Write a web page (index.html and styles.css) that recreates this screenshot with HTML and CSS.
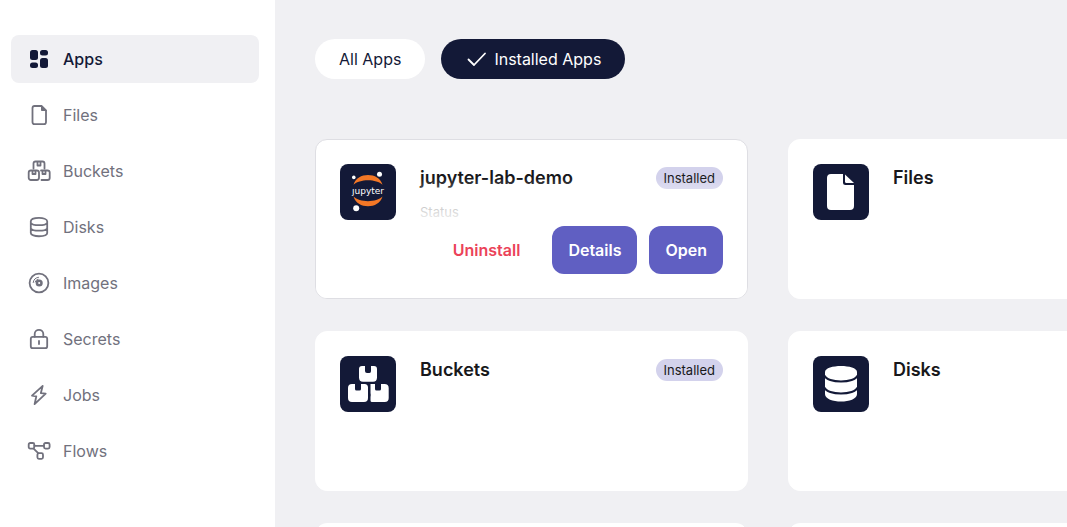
FILE: index.html
```html
<!DOCTYPE html>
<html lang="en">
<head>
<meta charset="utf-8">
<meta name="viewport" content="width=device-width, initial-scale=1">
<title>Apps</title>
<link rel="stylesheet" href="styles.css">
</head>
<body>
<div class="layout">
  <nav class="sidebar" aria-label="Main">
    <a class="nav-item active" href="#apps" aria-current="page">
      <svg class="nav-icon" viewBox="0 0 24 24" fill="currentColor"><rect x="3" y="3" width="8" height="10" rx="2.5"/><rect x="3" y="15.500" width="8" height="5.500" rx="2.500"/><rect x="13" y="3" width="8" height="5.500" rx="2.500"/><rect x="13" y="11" width="8" height="10" rx="2.5"/></svg>
      <span>Apps</span>
    </a>
    <a class="nav-item" href="#files">
      <svg class="nav-icon line" viewBox="0 0 24 24"><path d="M7.500 3H14.500L19 7.500V19Q19 21.200 17 21.200H7.500Q5.500 21.200 5.500 19V5Q5.500 3 7.500 3Z"/><path d="M14.500 3V7.500H19Z" fill="currentColor" stroke-width="1"/></svg>
      <span>Files</span>
    </a>
    <a class="nav-item" href="#buckets">
      <svg class="nav-icon line" viewBox="0 0 24 24"><path d="M6.500 9.500V4.500Q6.500 2.500 8.500 2.500H15.500Q17.500 2.500 17.500 4.500V9.500M10.500 3V6.500H13.500V3"/><rect x="1.700" y="11.500" width="10.300" height="9.500" rx="2.200"/><path d="M5.500 12V15H8.500V12M14 11.500H20.500Q22.700 11.500 22.700 13.500V19Q22.700 21 20.500 21H14.500M15.500 12V15H18.500V12"/></svg>
      <span>Buckets</span>
    </a>
    <a class="nav-item" href="#disks">
      <svg class="nav-icon line" viewBox="0 0 24 24"><path d="M3.800 6.300C3.800 1.800 20.200 1.800 20.200 6.300V18C20.200 22.300 3.800 22.300 3.800 18ZM3.800 7.800C5.500 11 18.500 11 20.200 7.800M3.800 13.300C5.500 16.500 18.500 16.500 20.200 13.300"/></svg>
      <span>Disks</span>
    </a>
    <a class="nav-item" href="#images">
      <svg class="nav-icon line" viewBox="0 0 24 24"><circle cx="12" cy="12" r="9.400"/><circle cx="12.200" cy="12" r="2.300" stroke-width="2.500"/><path d="M6.200 11.500Q6.700 6.900 11.500 6.300M8.200 11Q8.800 8.600 11 8.300" stroke-width="1"/></svg>
      <span>Images</span>
    </a>
    <a class="nav-item" href="#secrets">
      <svg class="nav-icon line" viewBox="0 0 24 24"><rect x="3.800" y="9.800" width="16.400" height="11.400" rx="2"/><path d="M7.700 9.800V7C7.700 1.400 16.300 1.400 16.300 7V9.800M12 14V17"/></svg>
      <span>Secrets</span>
    </a>
    <a class="nav-item" href="#jobs">
      <svg class="nav-icon line" viewBox="0 0 24 24"><path d="M15.700 2.800L5 12.700L9.300 13.300L7.600 21.200L18.700 10.700L13.800 10.200Z"/></svg>
      <span>Jobs</span>
    </a>
    <a class="nav-item" href="#flows">
      <svg class="nav-icon line" viewBox="0 0 24 24"><rect x="1.700" y="4" width="5.600" height="5.600" rx="1.500"/><rect x="17" y="4" width="5.600" height="5.600" rx="1.500"/><rect x="10.400" y="14.200" width="5.600" height="5.600" rx="1.500"/><path d="M7.300 6.800H17M6.600 9.600L11.200 14.200"/></svg>
      <span>Flows</span>
    </a>
  </nav>

  <main class="content">
    <div class="filters">
      <button class="pill" type="button">All Apps</button>
      <button class="pill selected" type="button" aria-pressed="true">
        <svg class="check" viewBox="0 0 24 24"><path d="M3.500 12.500L9 18L20 6.500"/></svg>
        <span>Installed Apps</span>
      </button>
    </div>

    <div class="cards">
      <article class="card hovered">
        <svg class="app-icon" viewBox="0 0 56 56"><rect width="56" height="56" rx="8" fill="#131937"/><path d="M13.500 20.800C17 7.800 39 7.800 42.500 20.800C36.500 14.600 19.500 14.600 13.500 20.800Z" fill="#f37726"/><path d="M13.500 32.500C17 45.500 39 45.500 42.500 32.500C36.500 38.700 19.500 38.700 13.500 32.500Z" fill="#f37726"/><circle cx="13.800" cy="13.400" r="1.800" fill="#fff"/><circle cx="39.500" cy="10.300" r="2.500" fill="#fff"/><circle cx="16.200" cy="44.300" r="3" fill="#fff"/><text class="logo-text" x="28" y="29.500" text-anchor="middle">ȷupyter</text></svg>
        <div class="details">
          <div class="card-head"><h2>jupyter-lab-demo</h2><span class="badge">Installed</span></div>
          <p class="status">Status</p>
        </div>
        <div class="actions">
          <button class="btn danger" type="button">Uninstall</button>
          <button class="btn" type="button">Details</button>
          <button class="btn" type="button">Open</button>
        </div>
      </article>
      <article class="card">
        <svg class="app-icon" viewBox="0 0 56 56"><rect width="56" height="56" rx="8" fill="#131937"/><path d="M18 10H30V18.500Q30 21 32.500 21H41V42Q41 46 37 46H18Q14 46 14 42V14Q14 10 18 10Z" fill="#fff"/><path d="M32 10.500L41 19H33.500Q32 19 32 17.500Z" fill="#fff"/></svg>
        <div class="details">
          <div class="card-head"><h2>Files</h2></div>
        </div>
      </article>
      <article class="card">
        <svg class="app-icon" viewBox="0 0 56 56"><rect width="56" height="56" rx="8" fill="#131937"/><g fill="#fff"><path d="M22 10H25V15Q25 17 27 17H29.500Q31 17 31 15V10H34Q37 10 37 13V21.500Q37 25.700 33 25.700H23Q19 25.700 19 21.500V13Q19 10 22 10Z"/><path d="M12 28H15V33Q15 34.500 16.500 34.500H19.500Q21 34.500 21 33V28H24.500Q28 28 28 31.500V42Q28 46 24 46H12Q8 46 8 42V32Q8 28 12 28Z"/><path d="M30.500 28H35V33Q35 34.500 36.500 34.500H39.500Q41 34.500 41 33V28H44.500Q48.700 28 48.700 32V42Q48.700 46 44.700 46H32Q30.500 46 30.500 44.500V41Q31 39 30.500 37Z"/></g></svg>
        <div class="details">
          <div class="card-head"><h2>Buckets</h2><span class="badge">Installed</span></div>
        </div>
      </article>
      <article class="card">
        <svg class="app-icon" viewBox="0 0 56 56"><rect width="56" height="56" rx="8" fill="#131937"/><path d="M12 16C12 8 44 8 44 16V38C44 48 12 48 12 38Z" fill="#fff"/><path d="M11.500 19.500C14 27.500 42 27.500 44.500 19.500M11.500 31.500C14 39.500 42 39.500 44.500 31.500" fill="none" stroke="#131937" stroke-width="2.200"/></svg>
        <div class="details">
          <div class="card-head"><h2>Disks</h2></div>
        </div>
      </article>
      <article class="card"></article>
      <article class="card"></article>
    </div>
  </main>
</div>
</body>
</html>
```
FILE: styles.css
```css
* { box-sizing: border-box; }

body {
  margin: 0;
  overflow: hidden;
  background: #f0f0f3;
  color: #18181b;
  font-family: Inter, "Liberation Sans", sans-serif;
  font-size: 16px;
  line-height: 24px;
}

.layout { display: flex; height: 100vh; }

.sidebar {
  flex: 0 0 275px;
  display: flex;
  flex-direction: column;
  gap: 8px;
  padding: 35px 16px 0 11px;
  background: #fff;
}

.nav-item {
  display: flex;
  align-items: center;
  gap: 12px;
  padding: 12px 16px;
  border-radius: 8px;
  color: #71717d;
  text-decoration: none;
}

.nav-item.active {
  background: #f0f0f3;
  color: #131937;
  font-weight: 500;
}

.nav-icon { width: 24px; height: 24px; }

.line {
  fill: none;
  stroke: currentColor;
  stroke-width: 1.8;
  stroke-linejoin: round;
  stroke-linecap: round;
}

.content { flex: 1; min-width: 0; padding: 39px 40px 0; overflow: hidden; }

.filters { display: flex; gap: 16px; margin-bottom: 60px; }

button { font: inherit; border: 0; cursor: pointer; }

.pill {
  display: flex;
  align-items: center;
  gap: 5px;
  padding: 8px 24px;
  border-radius: 20px;
  background: #fff;
  color: #131937;
}

.pill.selected { background: #131937; color: #fff; }

.check {
  width: 24px;
  height: 24px;
  fill: none;
  stroke: currentColor;
  stroke-width: 1.8;
  stroke-linecap: round;
  stroke-linejoin: round;
}

.cards {
  display: grid;
  grid-template-columns: repeat(2, minmax(433px, 1fr));
  grid-auto-rows: minmax(160px, auto);
  gap: 32px 40px;
}

.card {
  position: relative;
  display: flex;
  align-items: flex-start;
  gap: 24px;
  padding: 24px;
  border: 1px solid #fff;
  border-radius: 12px;
  background: #fff;
  overflow: hidden;
}

.card.hovered { border-color: #dedee3; }

.app-icon { position: relative; z-index: 1; flex: none; width: 56px; height: 56px; }

.logo-text { fill: #fff; font-family: "DejaVu Sans", sans-serif; font-size: 9px; }

.details { flex: 1; }

.card-head { display: flex; align-items: center; justify-content: space-between; }

h2 { margin: 0; font-size: 18px; line-height: 28px; font-weight: 600; }

.badge {
  padding: 1px 8px;
  border-radius: 11px;
  background: #d3d2ec;
  font-size: 13px;
  line-height: 20px;
}

.status { margin: 10px 0 0; color: #7c7c7c; font-size: 13px; line-height: 20px; }

.actions {
  position: absolute;
  inset: auto 0 0;
  display: flex;
  align-items: flex-end;
  justify-content: flex-end;
  gap: 12px;
  padding: 48px 24px 24px;
  background: linear-gradient(rgba(255, 255, 255, 0), #fff 40%);
}

.btn {
  padding: 12px 16px;
  border-radius: 12px;
  background: #605fc2;
  color: #fff;
  font-weight: 600;
}

.btn.danger { padding: 12px 20px; background: transparent; color: #eb4258; }
```
